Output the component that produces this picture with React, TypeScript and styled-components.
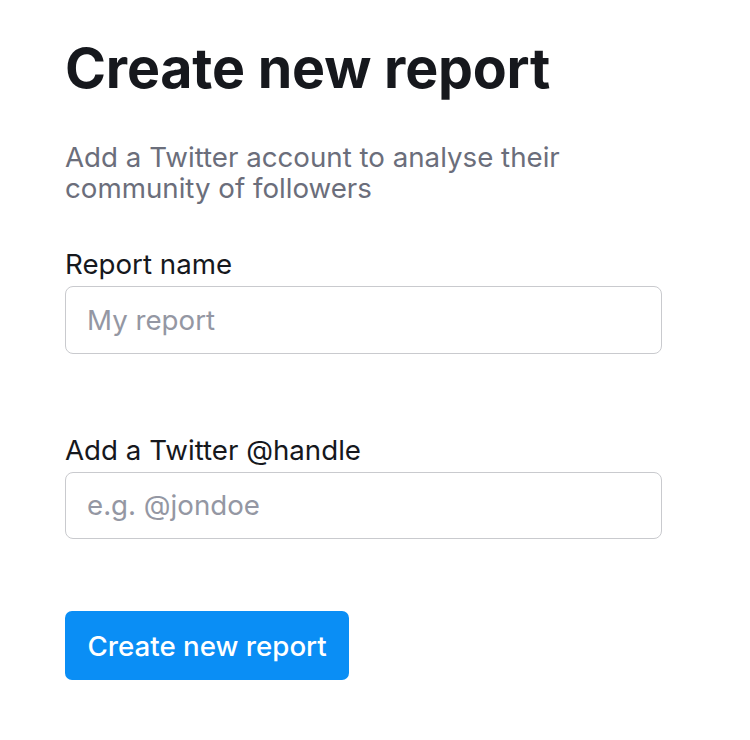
import React from "react";
import styled, { createGlobalStyle } from "styled-components";

const Global = createGlobalStyle`
  html, body { margin: 0; padding: 0; background: #ffffff; }
  body { font-family: Inter, "Noto Sans", sans-serif; -webkit-font-smoothing: antialiased; }
  * { box-sizing: border-box; }
`;

const Page = styled.main`
  padding: 35px 88px 40px 65px;
  display: flex;
  flex-direction: column;
`;

const Title = styled.h1`
  margin: 0;
  font-size: 55.5px;
  line-height: 66.6px;
  font-weight: 700;
  color: #16181d;
  letter-spacing: -0.2px;
`;

const Subtitle = styled.p`
  margin: 40.5px 0 0;
  font-size: 27.7px;
  line-height: 31px;
  color: #6b6e7b;
  max-width: 540px;
`;

const Form = styled.form`
  display: flex;
  flex-direction: column;
  margin-top: 44px;
`;

const Field = styled.label<{ $gap?: number }>`
  display: flex;
  flex-direction: column;
  gap: 6px;
  margin-top: ${(p) => p.$gap ?? 0}px;
`;

const LabelText = styled.span`
  font-size: 27.7px;
  line-height: 32px;
  color: #16181d;
`;

const Input = styled.input`
  width: 100%;
  height: 67.5px;
  border: 1.5px solid #c9cace;
  border-radius: 8px;
  padding: 0 21px;
  font-family: inherit;
  font-size: 27.7px;
  color: #16181d;
  background: #fff;
  outline: none;
  &::placeholder { color: #9497a3; }
`;

const Button = styled.button`
  align-self: flex-start;
  margin-top: 72px;
  height: 69px;
  padding: 0 22.5px;
  border: none;
  border-radius: 7px;
  background: #0a8ef5;
  color: #ffffff;
  font-family: inherit;
  font-size: 27.7px;
  font-weight: 500;
  cursor: pointer;
`;

export default function App() {
  return (
    <>
      <Global />
      <Page>
        <Title>Create new report</Title>
        <Subtitle>Add a Twitter account to analyse their community of followers</Subtitle>
        <Form onSubmit={(e) => e.preventDefault()}>
          <Field>
            <LabelText>Report name</LabelText>
            <Input placeholder="My report" />
          </Field>
          <Field $gap={80}>
            <LabelText>Add a Twitter @handle</LabelText>
            <Input placeholder="e.g. @jondoe" />
          </Field>
          <Button type="submit">Create new report</Button>
        </Form>
      </Page>
    </>
  );
}
